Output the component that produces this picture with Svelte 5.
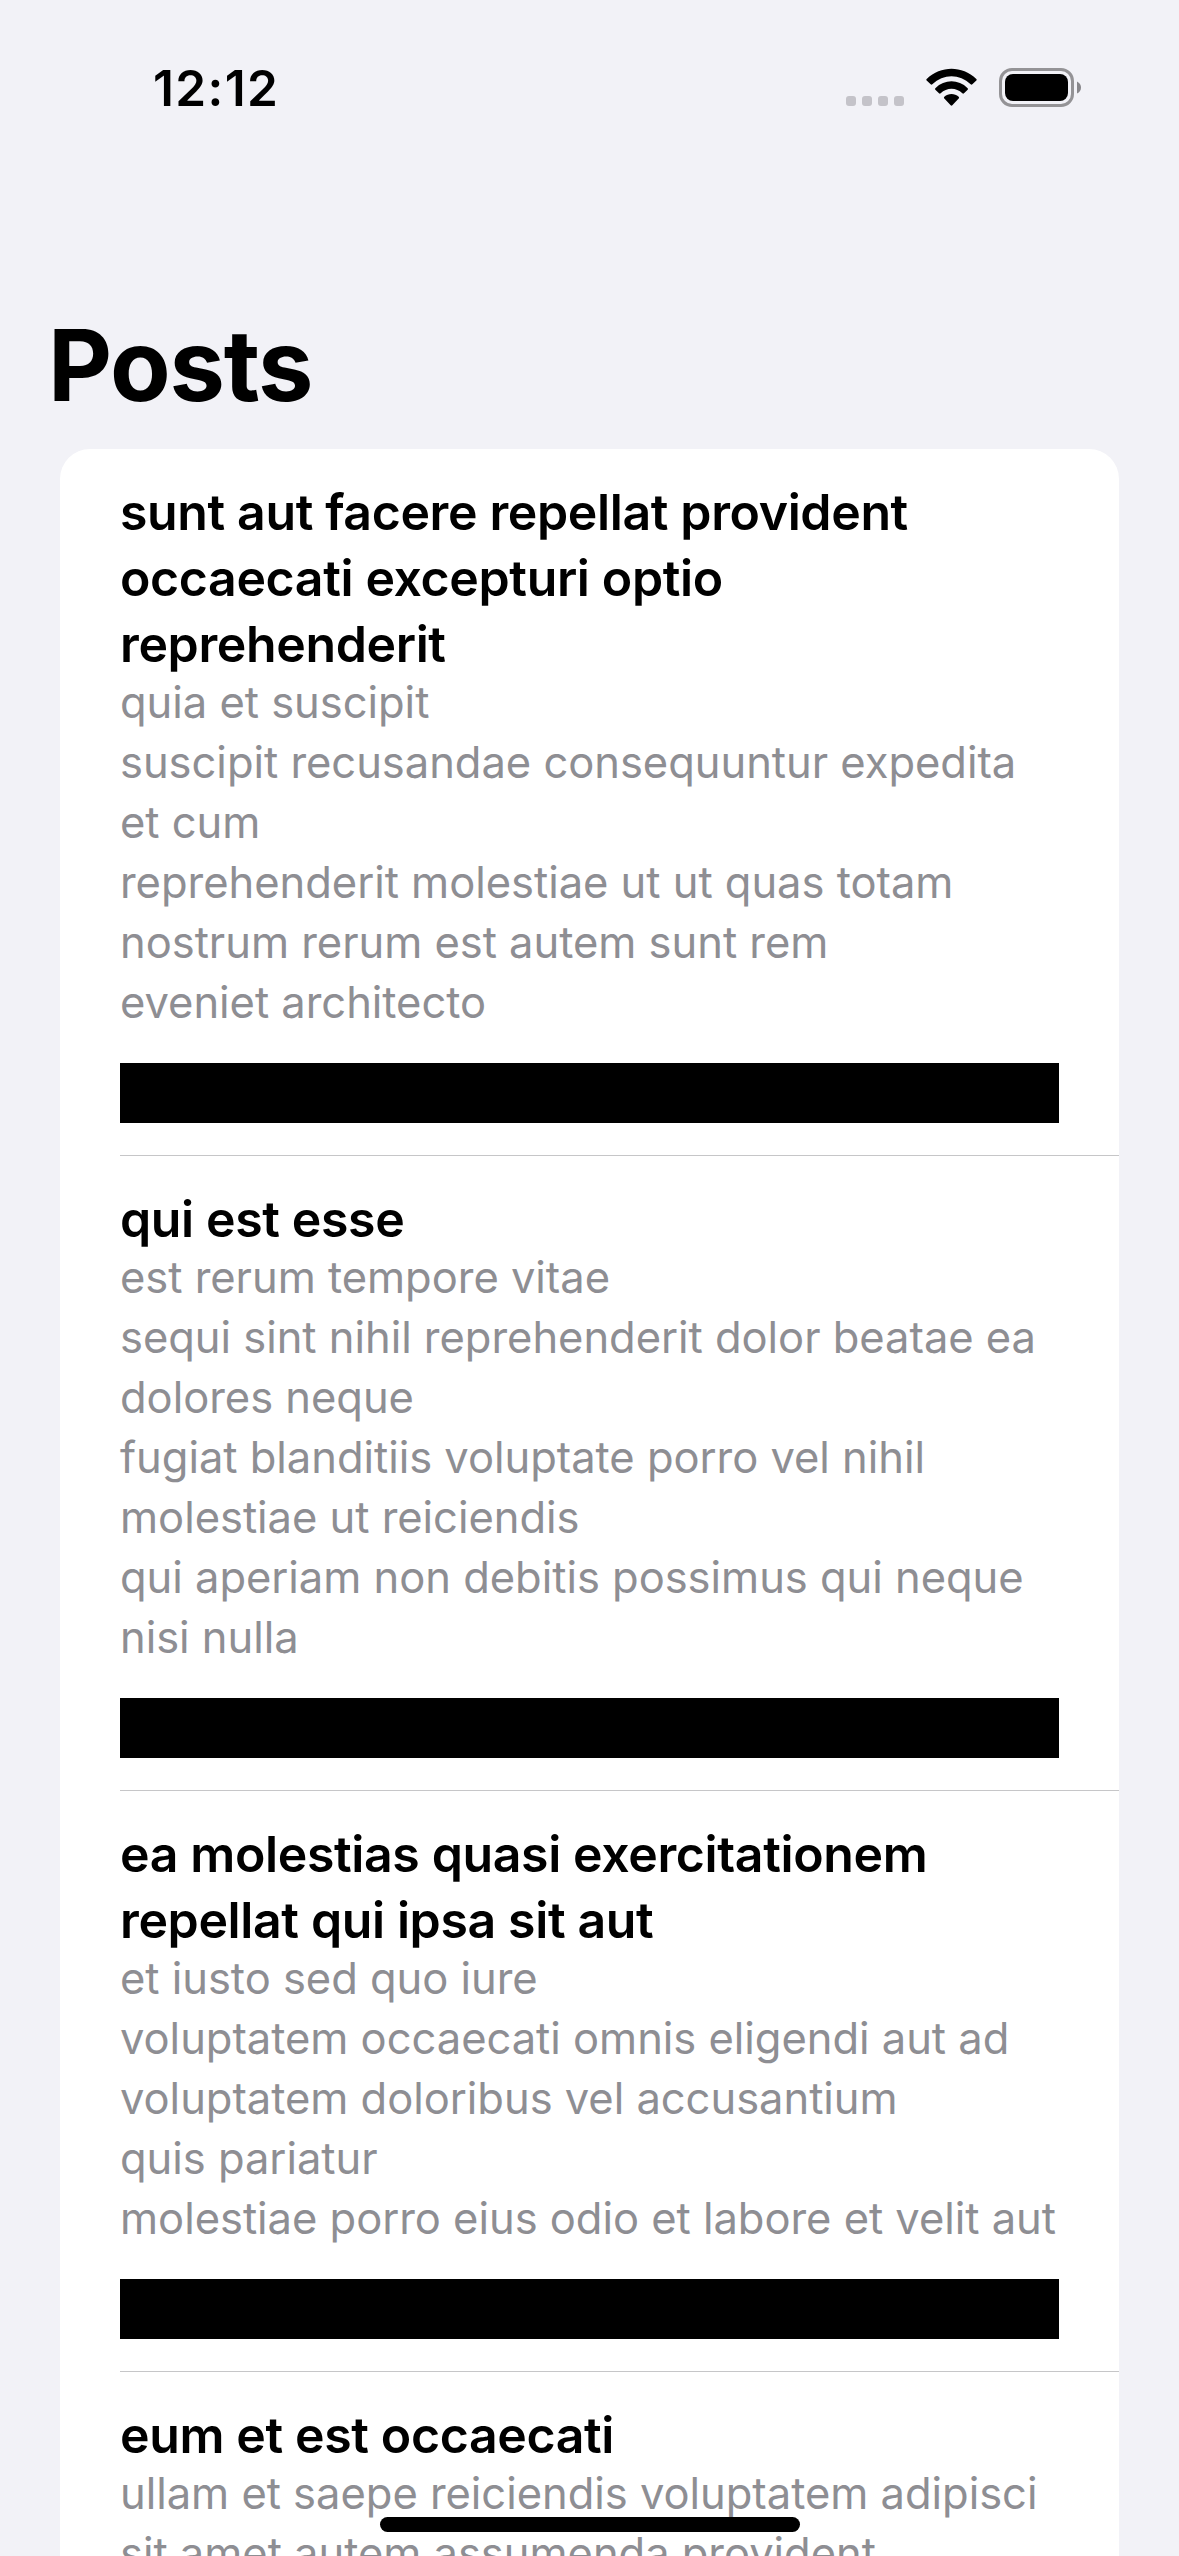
<script>
  const posts = [
    {
      title: ['sunt aut facere repellat provident', 'occaecati excepturi optio', 'reprehenderit'],
      body: [
        'quia et suscipit',
        'suscipit recusandae consequuntur expedita',
        'et cum',
        'reprehenderit molestiae ut ut quas totam',
        'nostrum rerum est autem sunt rem',
        'eveniet architecto'
      ]
    },
    {
      title: ['qui est esse'],
      body: [
        'est rerum tempore vitae',
        'sequi sint nihil reprehenderit dolor beatae ea',
        'dolores neque',
        'fugiat blanditiis voluptate porro vel nihil',
        'molestiae ut reiciendis',
        'qui aperiam non debitis possimus qui neque',
        'nisi nulla'
      ]
    },
    {
      title: ['ea molestias quasi exercitationem', 'repellat qui ipsa sit aut'],
      body: [
        'et iusto sed quo iure',
        'voluptatem occaecati omnis eligendi aut ad',
        'voluptatem doloribus vel accusantium',
        'quis pariatur',
        'molestiae porro eius odio et labore et velit aut'
      ]
    },
    {
      title: ['eum et est occaecati'],
      body: ['ullam et saepe reiciendis voluptatem adipisci', 'sit amet autem assumenda provident']
    }
  ];
</script>

<div class="screen">
  <header class="status">
    <time>12:12</time>
    <div class="indicators">
      <div class="dots"><i></i><i></i><i></i><i></i></div>
      <svg class="wifi" viewBox="318 54 153 114" aria-hidden="true">
        <path d="M320 87C363 46 426 46 469 87q2 2 0 4.500L457 103q-2.500 2-5 0C419 71 370 71 337 103q-2.500 2-5 0L320 91.500q-2-2.500 0-4.500Z" />
        <path d="M346 114.500C374 87 415 87 443 114.500q2 2.500 0 4.500L432 130q-2.500 2-5 0C409 112 380 112 362 130q-2.500 2-5 0L346 119q-2-2 0-4.500Z" />
        <path d="M373 140.500C385 129 404 129 416 140.500q2.500 2.500 0 5L397 166q-2.500 2.500-5 0L373 145.500q-2.500-2.500 0-5Z" />
      </svg>
      <svg class="battery" viewBox="0 0 82 39" aria-hidden="true">
        <rect class="shell" x="1.500" y="1.500" width="72" height="36" rx="11.500" />
        <rect x="6" y="6" width="63" height="27" rx="8" />
        <path class="cap" d="M78 13.500v12q4-2 4-6t-4-6Z" />
      </svg>
    </div>
  </header>

  <h1>Posts</h1>

  <main class="card">
    {#each posts as post}
      <article>
        <h2>
          {#each post.title as line}<span>{line}</span>{/each}
        </h2>
        <p>
          {#each post.body as line}<span>{line}</span>{/each}
        </p>
        <div class="block"></div>
      </article>
    {/each}
  </main>

  <div class="home"></div>
</div>

<style>
  .screen {
    position: relative;
    width: 1179px;
    height: 2556px;
    overflow: hidden;
    display: flex;
    flex-direction: column;
    background: #f2f2f7;
    color: #000;
    font-family: Inter, "Liberation Sans", sans-serif;
  }

  .status {
    height: 177px;
    flex: none;
    box-sizing: border-box;
    padding: 58px 98px 0 153px;
    display: flex;
    justify-content: space-between;
    align-items: flex-start;
  }

  time {
    font-size: 49.5px;
    font-weight: 600;
    line-height: 60px;
    letter-spacing: 1.38px;
  }

  .indicators {
    display: flex;
    align-items: flex-start;
    padding-top: 10px;
  }

  .dots {
    display: flex;
    gap: 6px;
    padding-top: 28px;
    margin-right: 22px;
  }

  .dots i {
    width: 10px;
    height: 10px;
    border-radius: 3px;
    background: #c4c3c9;
  }

  .wifi {
    width: 51px;
    height: 38px;
    margin-right: 22px;
  }

  .battery {
    width: 82px;
    height: 39px;
  }

  .shell {
    fill: none;
    stroke: #949396;
    stroke-width: 3;
  }

  .cap {
    fill: #88878b;
  }

  h1 {
    flex: none;
    margin: 0;
    padding: 128px 0 0 48px;
    height: 144px;
    font-size: 99px;
    font-weight: 700;
    line-height: 120px;
    letter-spacing: -1.25px;
  }

  .card {
    flex: none;
    margin: 0 60px;
    border-radius: 30px 30px 0 0;
    background: #fff;
  }

  article {
    margin-left: 60px;
    padding: 30px 60px 32px 0;
    border-bottom: 1px solid #c6c6c8;
  }

  span {
    display: block;
    white-space: nowrap;
  }

  h2 {
    margin: 0;
    font-size: 50px;
    font-weight: 600;
    line-height: 66px;
    letter-spacing: -0.37px;
  }

  p {
    margin: -5px 0 31px;
    color: #8e8e93;
    font-size: 43.5px;
    line-height: 60px;
    letter-spacing: -0.03px;
  }

  .block {
    height: 60px;
    background: #000;
  }

  /* Home indicator floats above the scrolling list. */
  .home {
    position: absolute;
    left: 380px;
    bottom: 24px;
    width: 420px;
    height: 15px;
    border-radius: 8px;
    background: #000;
  }
</style>
